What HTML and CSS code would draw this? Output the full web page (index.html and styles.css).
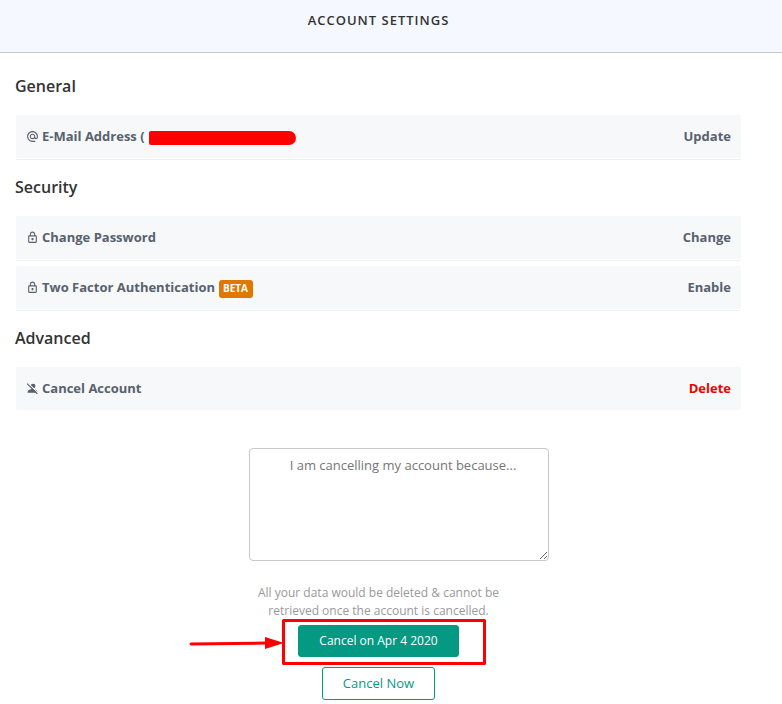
FILE: index.html
```html
<!DOCTYPE html>
<html lang="en">
<head>
<meta charset="utf-8">
<meta name="viewport" content="width=device-width, initial-scale=1">
<title>Account Settings</title>
<link rel="stylesheet" href="styles.css">
</head>
<body>
<header class="page-header"><h1>Account Settings</h1></header>
<main class="settings">
  <section class="group">
    <h2>General</h2>
    <div class="row">
      <svg class="icon" viewBox="0 0 24 24" aria-hidden="true"><path d="M12 1.95C6.48 1.95 2 6.43 2 11.95s4.48 10 10 10h5v-2h-5c-4.34 0-8-3.66-8-8s3.66-8 8-8 8 3.66 8 8v1.43c0 .79-.71 1.57-1.5 1.57s-1.5-.78-1.5-1.57v-1.43c0-2.76-2.24-5-5-5s-5 2.24-5 5 2.24 5 5 5c1.38 0 2.64-.56 3.54-1.47.65.89 1.77 1.47 2.96 1.47 1.97 0 3.5-1.6 3.5-3.57v-1.43c0-5.52-4.48-10-10-10zm0 13c-1.66 0-3-1.34-3-3s1.34-3 3-3 3 1.34 3 3-1.34 3-3 3z"/></svg>
      <span class="label">E-Mail Address (</span>
      <span class="redacted"></span>
      <button class="action" type="button">Update</button>
    </div>
  </section>
  <section class="group">
    <h2>Security</h2>
    <div class="row">
      <svg class="icon" viewBox="0 0 24 24" aria-hidden="true"><path d="M18 8h-1V6c0-2.76-2.24-5-5-5S7 3.24 7 6v2H6c-1.100 0-2 .9-2 2v10c0 1.100.9 2 2 2h12c1.100 0 2-.9 2-2V10c0-1.100-.9-2-2-2zM9 6c0-1.660 1.340-3 3-3s3 1.340 3 3v2H9V6zm9 14H6V10h12v10zm-6-3c1.100 0 2-.9 2-2s-.9-2-2-2-2 .9-2 2 .9 2 2 2z"/></svg>
      <span class="label">Change Password</span>
      <button class="action" type="button">Change</button>
    </div>
    <div class="row">
      <svg class="icon" viewBox="0 0 24 24" aria-hidden="true"><path d="M18 8h-1V6c0-2.76-2.24-5-5-5S7 3.24 7 6v2H6c-1.100 0-2 .9-2 2v10c0 1.100.9 2 2 2h12c1.100 0 2-.9 2-2V10c0-1.100-.9-2-2-2zM9 6c0-1.660 1.340-3 3-3s3 1.340 3 3v2H9V6zm9 14H6V10h12v10zm-6-3c1.100 0 2-.9 2-2s-.9-2-2-2-2 .9-2 2 .9 2 2 2z"/></svg>
      <span class="label">Two Factor Authentication</span>
      <span class="badge">BETA</span>
      <button class="action" type="button">Enable</button>
    </div>
  </section>
  <section class="group">
    <h2>Advanced</h2>
    <div class="row row-open">
      <svg class="icon" viewBox="0 0 24 24" aria-hidden="true"><circle cx="13" cy="7.500" r="4.500"/><path d="M3 20v-2c0-3 5-5 9-5s9 2 9 5v2z"/><path class="gap" d="M4 2 23 21"/><path class="slash" d="M2 3 21 22"/></svg>
      <span class="label">Cancel Account</span>
      <button class="action action-danger" type="button">Delete</button>
    </div>
    <form class="cancel-form">
      <textarea class="reason" aria-label="Cancellation reason" placeholder="I am cancelling my account because..."></textarea>
      <p class="notice">All your data would be deleted &amp; cannot be retrieved once the account is cancelled.</p>
      <div class="scheduled">
        <button class="btn btn-primary" type="button">Cancel on Apr 4 2020</button>
        <svg class="callout" viewBox="0 0 298 48" aria-hidden="true"><rect x="94.500" y="2.500" width="201" height="43" /><path class="shaft" d="M2 26 78 25"/><path class="head" d="M76 19 95 25 76 31z"/></svg>
      </div>
      <button class="btn btn-outline" type="button">Cancel Now</button>
    </form>
  </section>
</main>
</body>
</html>
```
FILE: styles.css
```css
* { box-sizing: border-box; }

body {
  margin: 0;
  background: #fff;
  color: #333;
  font-family: "Open Sans", "Noto Sans", sans-serif;
  font-size: 13px;
}

button, textarea { font: inherit; }

.page-header {
  padding: 10px 25px 22px 0;
  border-bottom: 1px solid #c8c8cc;
  background: #f5f8ff;
  text-align: center;
}

h1 {
  margin: 0;
  font-size: 13px;
  font-weight: 600;
  line-height: 20px;
  letter-spacing: 1px;
  text-transform: uppercase;
}

.settings { padding: 20px 41px 0 16px; }

.group { margin-bottom: 16px; }

h2 {
  margin: 0 0 16px -1px;
  font-size: 16px;
  font-weight: 600;
  line-height: 26px;
}

.row {
  display: flex;
  align-items: center;
  gap: 4px;
  height: 43px;
  margin-bottom: 7px;
  padding: 0 10px 2px;
  border-radius: 2px;
  background: #f6f8fa;
  box-shadow: 0 1px #fff, 0 2px #eef0f1;
  color: #58616d;
  font-weight: 700;
}

.row:last-child { margin-bottom: 0; }

.group .row:last-child { margin-bottom: 2px; }

.row-open { margin-bottom: 0; box-shadow: none; }

.icon {
  width: 13px;
  height: 13px;
  margin: 2px -1px 0 0;
  fill: currentColor;
}

.icon .gap { stroke: #f6f8fa; stroke-width: 2px; }

.icon .slash { stroke: currentColor; stroke-width: 2px; }

.redacted, .badge { margin-top: 4px; }

.redacted {
  width: 147px;
  height: 14px;
  border-radius: 2px 7px 7px 2px;
  background: #f00;
}

.badge {
  padding: 0 5px 2px 4px;
  border-radius: 3px;
  background: #e07800;
  color: #fff;
  font-size: 10px;
  line-height: 16px;
}

.action {
  margin-left: auto;
  padding: 0;
  border: 0;
  background: none;
  color: inherit;
  cursor: pointer;
}

.action-danger { color: #f00000; }

.cancel-form {
  display: flex;
  flex-direction: column;
  align-items: center;
  padding-top: 38px;
}

.reason {
  width: 300px;
  height: 113px;
  margin-left: 41px;
  padding: 7px 12px 7px 20px;
  border: 1px solid #c8c8c8;
  border-radius: 4px;
  background: #fff;
  text-align: center;
}

.reason::placeholder { color: #757575; }

.notice {
  max-width: 260px;
  margin: 23px 0 5px;
  color: #999;
  font-size: 12px;
  line-height: 18px;
  text-align: center;
}

.scheduled { position: relative; margin-bottom: 10px; }

.btn {
  display: block;
  padding: 0 20px;
  border: 1px solid #049983;
  border-radius: 3px;
  line-height: 31px;
  cursor: pointer;
}

.btn-primary {
  background: #049983;
  color: #fff;
  font-size: 12px;
  line-height: 30px;
}

.btn-outline { background: #fff; color: #049983; }

.callout {
  position: absolute;
  top: -7px;
  right: -28px;
  width: 298px;
  height: 48px;
  overflow: visible;
  fill: none;
  stroke: #f00;
  stroke-width: 3px;
  stroke-linejoin: round;
  stroke-linecap: round;
  pointer-events: none;
}

.callout .head { fill: #f00; stroke: none; }
```
